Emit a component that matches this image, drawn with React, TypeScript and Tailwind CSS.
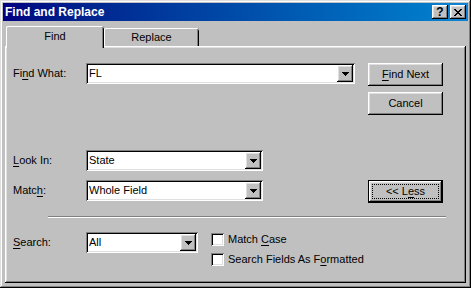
import React from "react";

const raised =
  "shadow-[inset_-1px_-1px_#000,inset_1px_1px_#fff,inset_-2px_-2px_#808080,inset_2px_2px_#dfdfdf]";
const sunken =
  "shadow-[inset_1px_1px_#808080,inset_-1px_-1px_#fff,inset_2px_2px_#000,inset_-2px_-2px_#dfdfdf]";

function Arrow() {
  return (
    <svg width="7" height="4" viewBox="0 0 7 4" shapeRendering="crispEdges">
      <rect x="0" y="0" width="7" height="1" fill="#000" />
      <rect x="1" y="1" width="5" height="1" fill="#000" />
      <rect x="2" y="2" width="3" height="1" fill="#000" />
      <rect x="3" y="3" width="1" height="1" fill="#000" />
    </svg>
  );
}

function Combo({ value, width }: { value: string; width: string }) {
  return (
    <div className={`${width} h-[21px] bg-white ${sunken} flex items-center pl-[3px] pr-[2px]`}>
      <span className="flex-1 text-[11px] leading-none text-black">{value}</span>
      <div className={`w-[16px] h-[17px] bg-[#c0c0c0] ${raised} flex items-center justify-center`}>
        <Arrow />
      </div>
    </div>
  );
}

function Button({ children, def }: { children: React.ReactNode; def?: boolean }) {
  if (def) {
    return (
      <div className="w-[75px] h-[23px] border border-black">
        <div className={`w-full h-full bg-[#c0c0c0] ${raised} flex items-center justify-center p-[3px]`}>
          <div className="w-full h-full border border-dotted border-black flex items-center justify-center text-[11px] leading-none">
            {children}
          </div>
        </div>
      </div>
    );
  }
  return (
    <div className={`w-[75px] h-[23px] bg-[#c0c0c0] ${raised} flex items-center justify-center text-[11px] leading-none`}>
      {children}
    </div>
  );
}

function Label({ children }: { children: React.ReactNode }) {
  return <div className="w-[73px] h-[21px] flex items-center text-[11px] leading-none">{children}</div>;
}

function U({ children }: { children: React.ReactNode }) {
  return <span className="underline underline-offset-[2px]">{children}</span>;
}

function Check({ children }: { children: React.ReactNode }) {
  return (
    <div className="h-[13px] flex items-center gap-[4px]">
      <div className={`w-[13px] h-[13px] bg-white ${sunken}`} />
      <span className="text-[11px] leading-none">{children}</span>
    </div>
  );
}

export default function App() {
  return (
    <div className="w-[471px] h-[288px] bg-[#c0c0c0] p-[3px] shadow-[inset_-1px_-1px_#000,inset_1px_1px_#dfdfdf,inset_-2px_-2px_#808080,inset_2px_2px_#fff] font-['Liberation_Sans',Arial,sans-serif] text-black flex flex-col select-none">
      {/* Title bar */}
      <div className="h-[18px] bg-gradient-to-r from-[#000080] to-[#1084d0] flex items-center pl-[2px] pr-[2px]">
        <span className="flex-1 text-white font-bold text-[12px] leading-none">Find and Replace</span>
        <div className={`w-[16px] h-[14px] bg-[#c0c0c0] ${raised} flex items-center justify-center`}>
          <span className="font-bold text-[12px] leading-none">?</span>
        </div>
        <div className={`ml-[2px] w-[16px] h-[14px] bg-[#c0c0c0] ${raised} flex items-center justify-center`}>
          <svg width="8" height="7" viewBox="0 0 8 7" shapeRendering="crispEdges">
            <path
              fill="#000"
              d="M0 0h2v1H0zM6 0h2v1H6zM1 1h2v1H1zM5 1h2v1H5zM2 2h4v1H2zM3 3h2v1H3zM2 4h4v1H2zM1 5h2v1H1zM5 5h2v1H5zM0 6h2v1H0zM6 6h2v1H6z"
            />
          </svg>
        </div>
      </div>

      <div className="px-[2px] flex flex-col">
        {/* Tabs */}
        <div className="h-[27px] -mb-[2px] relative z-10 flex items-end pl-[1px]">
          <div className="w-[98px] h-[22px] bg-[#c0c0c0] rounded-t-[2px] shadow-[inset_1px_0_#fff,inset_0_1px_#fff,inset_-1px_0_#000,inset_-2px_0_#808080] flex items-center justify-center pb-[2px] text-[11px] leading-none">
            Find
          </div>
          <div className="w-[95px] h-[18px] mb-[2px] bg-[#c0c0c0] rounded-t-[2px] shadow-[inset_1px_0_#fff,inset_0_1px_#fff,inset_-1px_0_#000,inset_-2px_0_#808080] flex items-center justify-center text-[11px] leading-none">
            Replace
          </div>
        </div>

        {/* Panel */}
        <div className="h-[237px] bg-[#c0c0c0] shadow-[inset_-1px_-1px_#000,inset_1px_1px_#fff,inset_-2px_-2px_#808080,inset_2px_2px_#dfdfdf] pt-[17px] pl-[8px] flex flex-col">
          <div className="flex items-start">
            <Label>
              Fi<U>n</U>d What:
            </Label>
            <Combo value="FL" width="w-[269px]" />
            <div className="ml-[13px]">
              <Button>
                <span>
                  <U>F</U>ind Next
                </span>
              </Button>
            </div>
          </div>
          <div className="ml-[355px] mt-[6px]">
            <Button>Cancel</Button>
          </div>

          <div className="flex items-start mt-[35px]">
            <Label>
              <U>L</U>ook In:
            </Label>
            <Combo value="State" width="w-[177px]" />
          </div>

          <div className="flex items-start mt-[9px]">
            <Label>
              Matc<U>h</U>:
            </Label>
            <Combo value="Whole Field" width="w-[177px]" />
            <div className="ml-[105px]">
              <Button def>
                <span>
                  &lt;&lt; L<U>e</U>ss
                </span>
              </Button>
            </div>
          </div>

          <div className="ml-[35px] mt-[13px] w-[398px] h-[2px] border-t border-t-[#808080] border-b border-b-white" />

          <div className="flex items-start mt-[14px]">
            <Label>
              <U>S</U>earch:
            </Label>
            <Combo value="All" width="w-[112px]" />
            <div className="ml-[13px] mt-[1px] flex flex-col gap-[7px]">
              <Check>
                Match <U>C</U>ase
              </Check>
              <Check>
                Search Fields As F<U>o</U>rmatted
              </Check>
            </div>
          </div>
        </div>
      </div>
    </div>
  );
}
